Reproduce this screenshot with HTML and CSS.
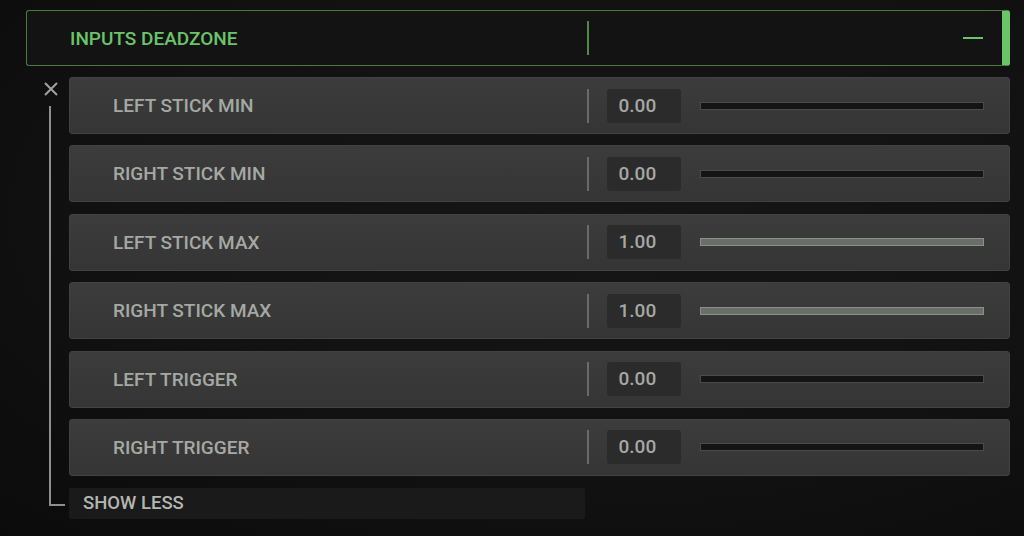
FILE: index.html
```html
<!DOCTYPE html>
<html lang="en">

<head>
    <meta charset="UTF-8">
    <meta name="viewport" content="width=device-width, initial-scale=1.0">
    <title>Inputs Deadzone</title>
    <link rel="stylesheet" href="styles.css">
</head>

<body>
    <div class="panel">
        <div class="panel-header">
            <div class="header-title">INPUTS DEADZONE</div>
            <div class="header-divider"></div>
            <div class="header-spacer"></div>
            <div class="header-toggle"></div>
        </div>

        <div class="panel-body">
            <div class="tree">
                <svg class="tree-close" width="14" height="14" viewBox="0 0 14 14">
                    <path d="M1 1 L13 13 M13 1 L1 13" stroke="#a2a2a2" stroke-width="2" fill="none" />
                </svg>
                <div class="tree-line"></div>
            </div>

            <div class="rows">
                <div class="setting-row">
                    <div class="setting-label">LEFT STICK MIN</div>
                    <div class="setting-divider"></div>
                    <div class="setting-value">0.00</div>
                    <div class="slider"></div>
                </div>
                <div class="setting-row">
                    <div class="setting-label">RIGHT STICK MIN</div>
                    <div class="setting-divider"></div>
                    <div class="setting-value">0.00</div>
                    <div class="slider"></div>
                </div>
                <div class="setting-row">
                    <div class="setting-label">LEFT STICK MAX</div>
                    <div class="setting-divider"></div>
                    <div class="setting-value">1.00</div>
                    <div class="slider slider-full"></div>
                </div>
                <div class="setting-row">
                    <div class="setting-label">RIGHT STICK MAX</div>
                    <div class="setting-divider"></div>
                    <div class="setting-value">1.00</div>
                    <div class="slider slider-full"></div>
                </div>
                <div class="setting-row">
                    <div class="setting-label">LEFT TRIGGER</div>
                    <div class="setting-divider"></div>
                    <div class="setting-value">0.00</div>
                    <div class="slider"></div>
                </div>
                <div class="setting-row">
                    <div class="setting-label">RIGHT TRIGGER</div>
                    <div class="setting-divider"></div>
                    <div class="setting-value">0.00</div>
                    <div class="slider"></div>
                </div>

                <div class="show-less">SHOW LESS</div>
            </div>
        </div>
    </div>
</body>

</html>
```

FILE: styles.css
```css
html,
body {
    height: 100%;
}

body {
    margin: 0;
    font-family: Roboto, "Liberation Sans", sans-serif;
    font-weight: 500;
    background: radial-gradient(ellipse at 60% 40%, #161616 0%, #111111 60%, #0b0b0b 100%);
    overflow: hidden;
}

.panel {
    margin: 10px 14px 0 26px;
}

/* header bar */
.panel-header {
    height: 56px;
    box-sizing: border-box;
    display: flex;
    align-items: center;
    background-color: #131313;
    border: 1px solid #4a7a3c;
    border-right: 8px solid #6cc46a;
    border-radius: 3px;
}

.header-title {
    flex: 0 0 560px;
    box-sizing: border-box;
    padding-left: 43px;
    font-size: 19px;
    color: #6cc46a;
}

.header-divider {
    width: 1.5px;
    height: 34px;
    background-color: #4f8a40;
}

.header-spacer {
    flex: 1;
}

.header-toggle {
    width: 20px;
    height: 2.5px;
    margin-right: 19px;
    background-color: #6cc46a;
}

/* body */
.panel-body {
    display: flex;
    margin-top: 11px;
}

.tree {
    width: 43px;
    display: flex;
    flex-direction: column;
}

.tree-close {
    margin: 5px 0 0 18px;
}

.tree-line {
    flex: 1;
    width: 14px;
    margin: 10px 0 13px 23px;
    border-left: 2px solid #8f8f8f;
    border-bottom: 2px solid #8f8f8f;
}

.rows {
    flex: 1;
    display: flex;
    flex-direction: column;
    gap: 11.4px;
}

.setting-row {
    height: 57px;
    box-sizing: border-box;
    display: flex;
    align-items: center;
    background: linear-gradient(#3c3c3c, #353535);
    border: 1px solid #424242;
    border-radius: 3px;
}

.setting-label {
    flex: 0 0 517px;
    box-sizing: border-box;
    padding-left: 43px;
    font-size: 19px;
    color: #a4a9a3;
}

.setting-divider {
    width: 1.5px;
    height: 34px;
    background-color: #6a6a6a;
}

.setting-value {
    width: 74px;
    height: 34px;
    box-sizing: border-box;
    margin-left: 18px;
    padding-left: 12px;
    line-height: 34px;
    font-size: 19px;
    color: #a4a9a3;
    background-color: #2b2b2b;
    border-radius: 3px;
}

.slider {
    width: 284px;
    height: 8px;
    box-sizing: border-box;
    margin-left: 19px;
    background-color: #141414;
    border: 1px solid #4a4a4a;
}

.slider-full {
    background-color: #6a6e69;
    border-color: #8c908b;
}

.show-less {
    width: 516px;
    height: 31px;
    box-sizing: border-box;
    margin-top: 0.6px;
    padding-left: 14px;
    line-height: 31px;
    font-size: 18.5px;
    color: #b3b7b2;
    background-color: #1a1a1a;
    border-radius: 2px;
}
```
